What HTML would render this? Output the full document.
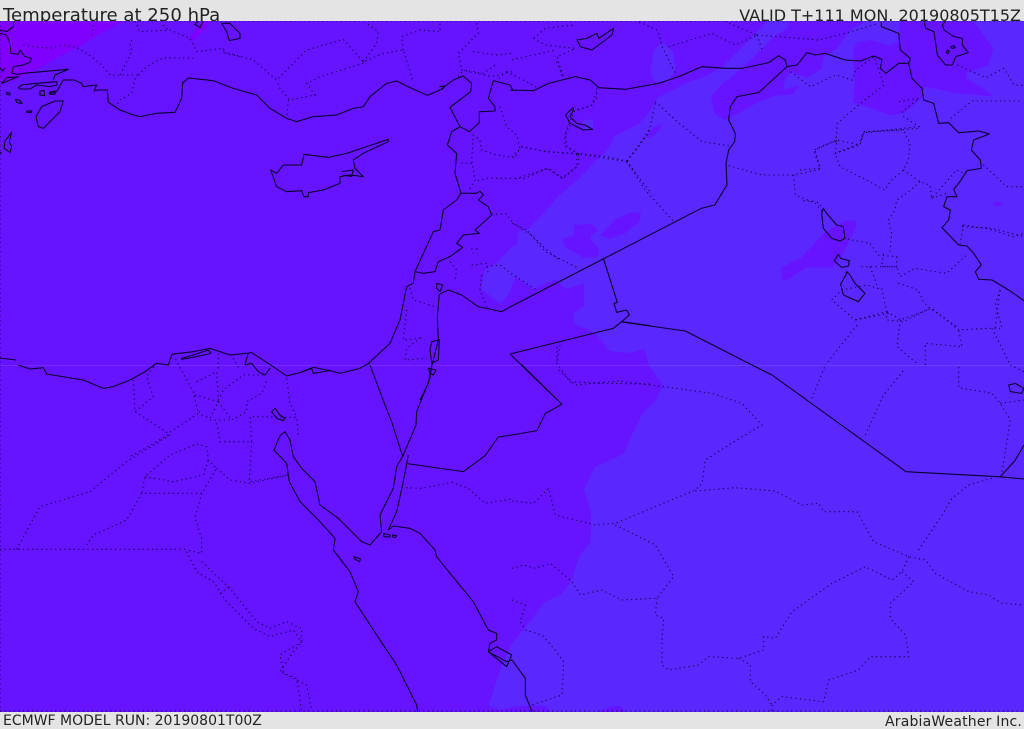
<!DOCTYPE html>
<html><head><meta charset="utf-8"><title>Temperature at 250 hPa</title>
<style>
html,body{margin:0;padding:0;background:#e4e4e4;width:1024px;height:729px;overflow:hidden}
svg{display:block;position:absolute;left:0;top:0}
text{font-family:"DejaVu Sans","Liberation Sans",sans-serif;fill:#222}
.s polyline,.s polygon{fill:none;stroke:#08002a;stroke-width:1.05;vector-effect:non-scaling-stroke;stroke-linejoin:round}
.d polyline{fill:none;stroke:#0c0040;stroke-width:1.1;stroke-dasharray:1.2 3.4;vector-effect:non-scaling-stroke}
.f polygon{stroke-width:2;stroke-linejoin:round;vector-effect:non-scaling-stroke}
.b polygon{fill:#6614ff;stroke:#6614ff}
.l polygon{fill:#5a28ff;stroke:#5a28ff}
.v polygon{fill:#8000ff;stroke:#8000ff}
</style></head><body>
<svg width="1024" height="729" viewBox="0 0 1024 729" xmlns="http://www.w3.org/2000/svg">
<rect width="1024" height="729" fill="#e4e4e4"/>
<text x="3" y="21" font-size="18.1">Temperature at 250 hPa</text>
<text x="1021" y="21" font-size="16" text-anchor="end">VALID T+111 MON. 20190805T15Z</text>
<text x="3" y="725" font-size="14">ECMWF MODEL RUN: 20190801T00Z</text>
<text x="885" y="726" font-size="14" letter-spacing=".18">ArabiaWeather Inc.</text>
<svg x="0" y="21" width="1024" height="691" viewBox="0 21 1024 691">
<rect x="0" y="21" width="1024" height="691" fill="#6614ff"/>
<!-- fills -->
<g class="f l"><polygon points="769,21 734,57 724,67 705,78 689,83 659,98 650,113 639,125 615,137 609,150 595,163 579,180 559,197 545,213 529,230 519,232 518,245 512,248 497,264 486,270 482,288 500,302 507,295 515,275 533,288 545,283 557,278 565,288 585,282 585,307 575,313 575,323 597,333 610,350 630,352 645,348 650,365 664,385 656,402 644,413 632,437 624,455 595,468 585,490 592,512 592,542 580,557 572,582 562,595 545,603 525,630 512,645 503,665 490,705 500,709 512,706 532,704 545,705 553,712 595,712 612,705 620,705 627,712 1024,712 1024,21"/></g>
<g class="f b" transform="translate(724,15) scale(.33333)">
<polygon points="195,18 195,40 150,68 90,130 30,185 0,205 -36,246 -27,294 3,312 20,305 100,260 150,240 205,235 220,215 175,228 180,195 200,170 250,185 290,160 297,125 340,95 380,40 420,18"/>
<polygon points="390,110 400,85 440,78 500,95 525,80 530,18 745,18 805,100 790,150 725,170 725,190 800,240 700,232 600,212 590,250 540,290 500,298 450,280 390,260 395,200"/>
</g>
<g class="f b" transform="translate(400,200) scale(.33333)">
<polygon points="525,78 570,75 590,90 570,105 570,120 595,150 590,170 550,170 500,140 490,120 525,105"/>
<polygon points="605,105 650,60 690,40 720,40 715,65 670,100 630,113"/>
</g>
<g class="f b" transform="translate(512,0) scale(.33333)">
<polygon points="405,410 425,385 445,375 440,390 415,412"/>
<polygon points="810,805 870,775 940,700 1000,665 1030,665 1030,680 985,770 960,800 880,800 830,835 812,838"/>
<polygon points="1445,612 1460,608 1470,613 1455,617"/>
</g>
<g class="f l" transform="translate(512,0) scale(.33333)">
<polygon points="418,215 430,150 450,130 480,155 487,215 460,245 430,240"/>
<polygon points="215,365 240,360 240,385 222,388"/>
</g>
<g class="f v" transform="translate(0,15) scale(.33333)">
<polygon points="0,18 365,18 330,35 240,90 180,120 130,150 80,175 40,195 0,200"/>
<polygon points="570,70 590,45 615,18 630,18 600,55 575,75"/>
</g>
<rect x="0" y="365" width="1024" height="1" fill="#fff" opacity=".1"/>
<!-- dotted borders -->
<g class="d">
<polyline points="0,21 1024,21"/><polyline points="0,711 1024,711"/><polyline points="0,21 0,712"/>
<g transform="translate(0,15) scale(.33333)">
<polyline points="70,90 100,95 150,100 190,90 230,97 260,115 300,145 330,180 365,180 415,180"/>
<polyline points="405,18 420,50 510,45 570,70 590,110 670,100 675,115 720,125"/>
<polyline points="490,30 505,45"/><polyline points="395,75 390,85 395,110 365,170 360,180"/>
<polyline points="415,180 440,155 490,128 580,130"/><polyline points="405,190 395,235 360,255 350,270"/>
<polyline points="280,30 275,65"/>
</g>
<g transform="scale(.33333)">
<polyline points="670,155 760,180 830,240 860,210 920,150 1030,118 1090,185 1150,160 1210,150 1240,245"/>
<polyline points="1090,190 960,230 920,250 945,285 870,300 840,265 830,240"/>
<polyline points="865,300 860,355"/><polyline points="1090,185 1130,130 1135,95 1100,70"/>
<polyline points="1210,150 1205,110 1260,90 1320,95 1320,65"/>
<polyline points="1430,70 1435,100 1375,160 1385,210 1475,230 1536,215"/><polyline points="1420,155 1490,165 1536,160"/>
</g>
<g transform="translate(400,60) scale(.33333)">
<polyline points="300,140 320,200 350,225 360,265 345,293 320,290 290,285 245,270 240,240 220,225 215,300 225,360 205,395"/>
<polyline points="215,310 175,310"/><polyline points="365,260 440,275 530,280 620,290 680,303 715,350 750,395"/>
<polyline points="680,303 720,250 750,205"/><polyline points="530,283 530,320 490,355 440,325 375,355 260,355 225,365"/>
<polyline points="510,195 495,230 495,260 525,275"/><polyline points="590,85 590,115 570,140 520,150"/>
<polyline points="320,35 290,60"/><polyline points="320,35 370,60 415,85"/><polyline points="175,50 190,30 250,40 290,12"/>
<polyline points="470,5 490,55"/><polyline points="275,463 320,462 340,490 400,530 440,570 480,600"/>
</g>
<g transform="translate(512,0) scale(.33333)">
<polyline points="430,305 490,360 570,425 650,437"/><polyline points="430,310 410,400 345,485"/>
<polyline points="345,485 200,462 100,455 30,440 0,470"/><polyline points="345,485 400,570 485,665"/>
<polyline points="200,462 200,495 150,535 110,505 0,540"/><polyline points="200,462 165,440 160,400 185,335 240,315 255,270"/>
<polyline points="0,670 45,690 100,755 200,805"/>
<polyline points="65,115 100,85 190,75"/><polyline points="65,115 100,135 190,145 135,170 155,235"/><polyline points="0,180 130,150"/>
<polyline points="435,90 380,65"/><polyline points="440,100 450,140 490,220"/><polyline points="470,140 600,100 670,135 735,105 640,65"/>
<polyline points="735,105 920,120 1000,100 1100,70"/><polyline points="735,105 750,150"/>
<polyline points="650,497 750,525 845,525 925,508 905,450 975,420 970,460 1045,430 1055,398 1220,385"/>
<polyline points="845,525 850,585 910,610 935,640"/>
<polyline points="135,1040 135,1095"/><polyline points="1130,940 1030,960"/><polyline points="1035,975 940,1095"/>
<polyline points="1125,935 1165,960 1260,925 1340,990 1430,985 1470,985 1450,910 1465,870"/>
<polyline points="1165,960 1155,1040 1220,1095"/><polyline points="1240,1095 1240,1030 1350,1040 1340,990"/>
<polyline points="1440,985 1495,1095"/><polyline points="1350,680 1440,685 1536,710"/>
</g>
<g transform="translate(724,15) scale(.33333)">
<polyline points="200,170 260,215 335,180 385,195 395,165 450,125 480,210 410,265 340,325 335,385"/>
<polyline points="525,260 585,250 535,290 540,305 585,335 420,352 408,380"/>
<polyline points="680,310 745,258 890,258"/><polyline points="700,150 785,188 840,160 870,210 900,212"/>
</g>
<g transform="translate(400,200) scale(.33333)">
<polyline points="260,200 300,195 340,225 410,270"/><polyline points="245,225 240,270 260,320"/>
<polyline points="150,185 170,210 165,240"/><polyline points="215,195 260,190 265,225"/>
<polyline points="215,145 220,160"/><polyline points="230,145 232,160"/>
<polyline points="30,265 40,300 105,320"/><polyline points="20,330 10,420 60,415 20,445 15,480 80,475"/>
<polyline points="480,435 470,490 510,545 600,550 750,552"/>
</g>
<g transform="translate(512,365) scale(.33333)">
<polyline points="140,15 190,60 320,48 455,65 600,85 690,115 750,180 650,240 580,285 570,355 550,375 310,475 250,480 130,450 110,370 65,415 0,408"/>
<polyline points="310,480 430,540 485,635 435,700 330,705 270,675 205,690 180,650 115,595 70,610 35,600 0,610"/>
<polyline points="550,378 670,368 790,378 870,420 920,415 935,440 1035,440 1085,530 1190,575 1240,585 1270,625 1370,680 1430,690 1470,715 1536,720"/>
<polyline points="1190,575 1170,620 1140,645 1060,605 960,655 840,740 790,820 755,815 755,855 680,880 590,875 560,900 470,915 450,900 450,820 455,760 430,750 435,700"/>
<polyline points="1170,620 1205,650 1135,715 1135,760 1180,810 1190,875 1075,875 1040,915 950,945 935,1010 810,995 780,1020 780,1040"/>
<polyline points="680,880 715,900 715,950 760,990 780,1020"/><polyline points="1220,555 1290,450 1320,400 1370,360 1440,340"/>
<polyline points="900,100 940,0"/><polyline points="1060,210 1115,90 1180,10"/>
<polyline points="1470,320 1495,165 1465,115 1440,85 1340,68 1340,0"/><polyline points="1465,115 1536,105"/>
<polyline points="40,795 90,810 125,850 155,890 150,990 60,1020"/><polyline points="0,705 40,720 25,770 40,795"/><polyline points="1495,0 1536,20"/>
</g>
<g transform="translate(800,130) scale(.33333)">
<polyline points="0,120 60,115 45,60 110,30 180,45 190,5 310,0 330,40 325,90 310,120 270,155 255,180 200,150 120,110 105,70 180,45"/>
<polyline points="310,120 360,155 390,165 395,205 470,120 490,130"/><polyline points="395,205 440,190"/>
<polyline points="360,155 320,190 290,210 285,240 265,270 275,310 270,365"/><polyline points="10,212 50,215 70,235"/>
<polyline points="130,325 210,340 235,375 290,380 290,410 245,410 250,370"/><polyline points="185,410 290,410 300,440 345,415 440,430 500,375"/>
<polyline points="210,410 235,475 200,465 125,480 95,510 165,570 260,545 245,475"/><polyline points="295,460 355,480 370,515 390,535 470,590"/>
<polyline points="260,545 260,570 310,575 390,535"/><polyline points="600,480 585,600"/>
<polyline points="490,285 480,345"/><polyline points="490,285 560,295 640,320 672,310"/><polyline points="540,95 620,170 672,170"/>
</g>
<g transform="translate(130,340) scale(.33333)">
<polyline points="10,120 15,215 115,280 205,220 190,155 135,55"/><polyline points="80,70 50,110 70,170 15,215"/><polyline points="115,285 0,350"/>
<polyline points="200,125 260,95 265,180 280,150 340,105 405,105"/><polyline points="195,165 265,185 240,235 215,225 205,210"/>
<polyline points="265,185 305,240 350,215 350,185 395,160 410,120"/><polyline points="240,240 305,240"/>
<polyline points="260,250 270,305 365,305 360,230 500,232 505,285"/><polyline points="470,115 480,190 500,232"/>
<polyline points="365,305 358,425 475,405"/><polyline points="265,40 265,95"/><polyline points="310,55 330,90"/>
</g>
<g transform="translate(0,365) scale(.33333)">
<polyline points="0,553 565,553"/><polyline points="50,553 120,425 270,380 380,290 510,210"/>
<polyline points="260,540 280,510 380,465 425,385 605,385 650,310 625,285 620,245 590,237 510,270 435,335 425,385"/>
<polyline points="435,335 520,350 610,330 625,285"/><polyline points="605,385 585,460 605,520 605,565 560,555"/>
<polyline points="560,560 590,620 640,650 680,710 760,790 810,815 880,795 905,830 840,870 850,925 920,960 935,1035"/>
<polyline points="605,590 690,670 770,770 810,790 860,770 905,790 905,830 880,860 840,920 890,940 905,1040"/>
<polyline points="660,685 690,665"/><polyline points="1205,368 1265,370 1355,352 1405,370 1455,415 1536,402"/>
<polyline points="650,310 690,345 750,355 865,330"/>
</g>
</g>
<!-- solid -->
<g class="s">
<g transform="translate(0,15) scale(.33333)">
<polyline points="42,18 40,35 20,50 0,45"/>
<polyline points="0,55 20,60 28,80 33,115 55,118 60,105 75,125 95,130 90,142 70,150 40,155 36,175 55,178 70,175 205,163 165,180 160,195"/>
<polygon points="55,218 65,210 110,205 170,200 172,210 150,215 110,210 90,222 60,222"/>
<polygon points="5,205 20,188 55,185 30,195"/>
<polyline points="148,236 170,230 190,195 222,195 245,205 250,215 290,210 282,228 295,225 322,225 325,262 360,285 395,298 420,305 470,295 525,292 545,250 548,200"/>
<polygon points="190,258 165,258 125,275 108,305 115,335 130,340 150,320 180,290"/>
<polygon points="35,352 15,378 12,400 30,412 35,395 28,380"/>
<polygon points="120,228 132,226 134,242 120,240"/><polygon points="148,232 165,228 165,238 150,238"/>
<polygon points="46,254 60,256 66,266 50,262"/><polygon points="20,232 30,234 30,240 20,238"/><polygon points="80,288 95,288 95,292 80,292"/>
<polyline points="0,160 8,168 15,160"/><polyline points="0,412 5,416"/>
<polygon points="665,25 690,25 720,55 720,70 688,77 680,50"/><polyline points="595,18 585,28 600,38 610,18"/>
</g>
<g transform="scale(.33333)">
<polyline points="548,250 565,234 640,242 700,265 770,285 810,325 860,355 890,365 940,350 1010,345 1060,325 1090,320 1110,290 1160,250 1190,243 1220,258 1282,286 1320,270 1360,240 1390,228 1415,250 1412,275 1350,322 1380,380 1355,395 1342,435 1370,460 1365,520 1383,580 1370,600 1330,630 1320,690 1300,695 1245,815 1240,850 1220,860 1200,960 1170,1030 1100,1095"/>
<polyline points="1383,580 1430,580 1440,573 1450,585 1435,600 1465,620 1475,645 1425,690 1438,700 1390,705 1370,730 1388,742 1350,770 1315,785 1305,815 1270,820 1245,815"/>
<polygon points="812,510 830,520 850,495 905,495 912,463 985,472 1040,460 1165,418 1165,425 1090,460 1060,480 1065,505 1090,530 1050,525 1020,530 1020,550 970,570 925,578 925,590 912,590 905,572 860,575 830,560"/>
<polyline points="1025,515 1060,510 1055,530 1030,525"/>
<polyline points="1318,260 1335,258 1325,270"/>
</g>
<g transform="translate(400,60) scale(.33333)">
<polyline points="280,62 330,75 340,93"/><polyline points="280,62 265,115 285,140 285,153 238,155 238,188 208,215 180,200 165,210"/>
<polygon points="520,142 497,165 510,190 550,210 578,208 555,195 530,190 510,170 520,150"/>
</g>
<g transform="translate(512,0) scale(.33333)">
<polyline points="-5,270 65,272 110,250 190,230 235,240 260,263 340,268 440,250 500,230 570,200 640,205 690,205 770,188 800,167 820,180 825,200 855,195 885,158 910,165 940,160 1000,180 1045,183 1085,168 1110,178 1105,205 1122,220 1160,190 1190,190"/>
<polyline points="1108,65 1108,80 1160,100 1165,150 1195,175 1190,190 1200,235 1230,265 1235,300 1265,310 1280,370 1310,368 1340,398 1400,393 1432,402 1385,420 1378,450 1405,480 1408,505 1365,512 1340,550 1325,568 1335,590 1305,590 1295,620 1315,630 1310,660 1290,683 1340,735 1365,738 1385,760 1408,795 1390,815 1400,838 1440,840 1490,870 1536,902"/>
<polyline points="825,200 740,278 675,290 655,320 650,360 670,400 668,425 650,450 642,490 645,555 608,615 568,625 0,918"/>
<polygon points="195,120 225,115 255,100 260,115 305,85 300,105 240,150 205,140"/>
<polyline points="330,966 520,993 720,1095"/>
</g>
<g transform="translate(724,15) scale(.33333)">
<polyline points="600,18 605,40 630,50 640,120 665,150 685,150 695,125 733,113 715,90 715,70 690,65 660,45 655,30 665,18"/>
<polygon points="680,95 690,92 694,98 684,100"/><polygon points="670,105 676,108 672,116 667,112"/>
</g>
<g transform="translate(400,200) scale(.33333)">
<polyline points="336,318 305,335 235,320 185,285 145,270 118,283 112,350 115,420 95,500 85,550 60,600"/>
<polygon points="95,425 118,420 115,480 95,490 90,450"/><polygon points="85,505 108,510 100,525 90,520"/><polygon points="110,250 128,255 120,275 110,265"/>
<polyline points="330,462 640,385 665,365 688,345 680,330 650,337 642,310 652,307 610,175"/>
<polyline points="665,365 750,377"/><polyline points="330,462 472,600"/>
</g>
<g transform="translate(512,365) scale(.33333)">
<polyline points="30,0 150,118 100,145 75,197 0,210"/>
<polyline points="720,0 780,30 1182,320 1460,335 1536,342"/><polyline points="1465,335 1510,285 1536,240"/>
<polygon points="1490,60 1510,55 1535,70 1530,85 1495,80"/>
<polyline points="0,885 40,940 40,990 60,1040"/>
</g>
<g transform="translate(0,365) scale(.33333)">
<polyline points="1536,210 1495,216 1455,272 1390,320 1222,296"/>
<polyline points="1110,0 1155,120 1175,170 1205,265 1210,275"/>
<polyline points="1295,0 1290,40 1250,140 1248,180 1210,270 1190,305 1180,370 1140,450 1145,500 1110,540 1085,530 1015,460 960,420 945,350 905,310 880,275 870,225 855,200 840,212 822,255 860,295 868,350 900,410 960,470 1005,520 1000,555 1050,620 1075,680 1065,710 1130,810 1190,900 1250,1020 1253,1040"/>
<polyline points="1225,270 1210,350 1190,440 1165,495 1180,483 1230,490 1260,505 1305,555 1310,575 1350,625 1420,710 1465,795 1490,805 1490,825 1470,835 1465,860 1520,890 1536,885"/>
<polygon points="1465,860 1520,905 1535,870 1490,845"/>
<polygon points="1150,505 1170,510 1170,516 1152,515"/><polygon points="1178,510 1190,512 1186,518 1178,516"/>
<polygon points="1062,575 1082,582 1078,590 1064,582"/>
<polyline points="390,45 340,65 310,70 250,45 140,27 130,8 90,12 55,0"/>
</g>
<g transform="translate(130,340) scale(.33333)">
<polyline points="720,68 690,85 630,100 600,92 550,82 510,98 470,108 430,80 365,38 350,40 300,45 240,25 190,35 130,42 125,45 115,75 80,70 45,95 0,120"/>
<polygon points="155,55 190,45 235,30 243,40 200,50 155,58"/>
<polyline points="355,38 345,75 365,70 385,95 405,105 420,85"/><polyline points="510,98 545,85 550,100 600,92"/>
<polygon points="425,215 435,205 450,225 465,235 460,242 440,235"/>
</g>
<polyline points="0,358 16,360"/>
<g transform="translate(800,130) scale(.33333)">
<polygon points="70,235 80,250 110,285 130,290 135,325 120,333 95,325 70,295 65,250"/>
<polygon points="115,373 122,385 148,392 145,408 125,412 103,393"/>
<polygon points="140,425 138,435 122,462 130,495 175,515 195,490 165,460 150,435"/>
</g>
</g>
</svg>
</svg>
</body></html>
